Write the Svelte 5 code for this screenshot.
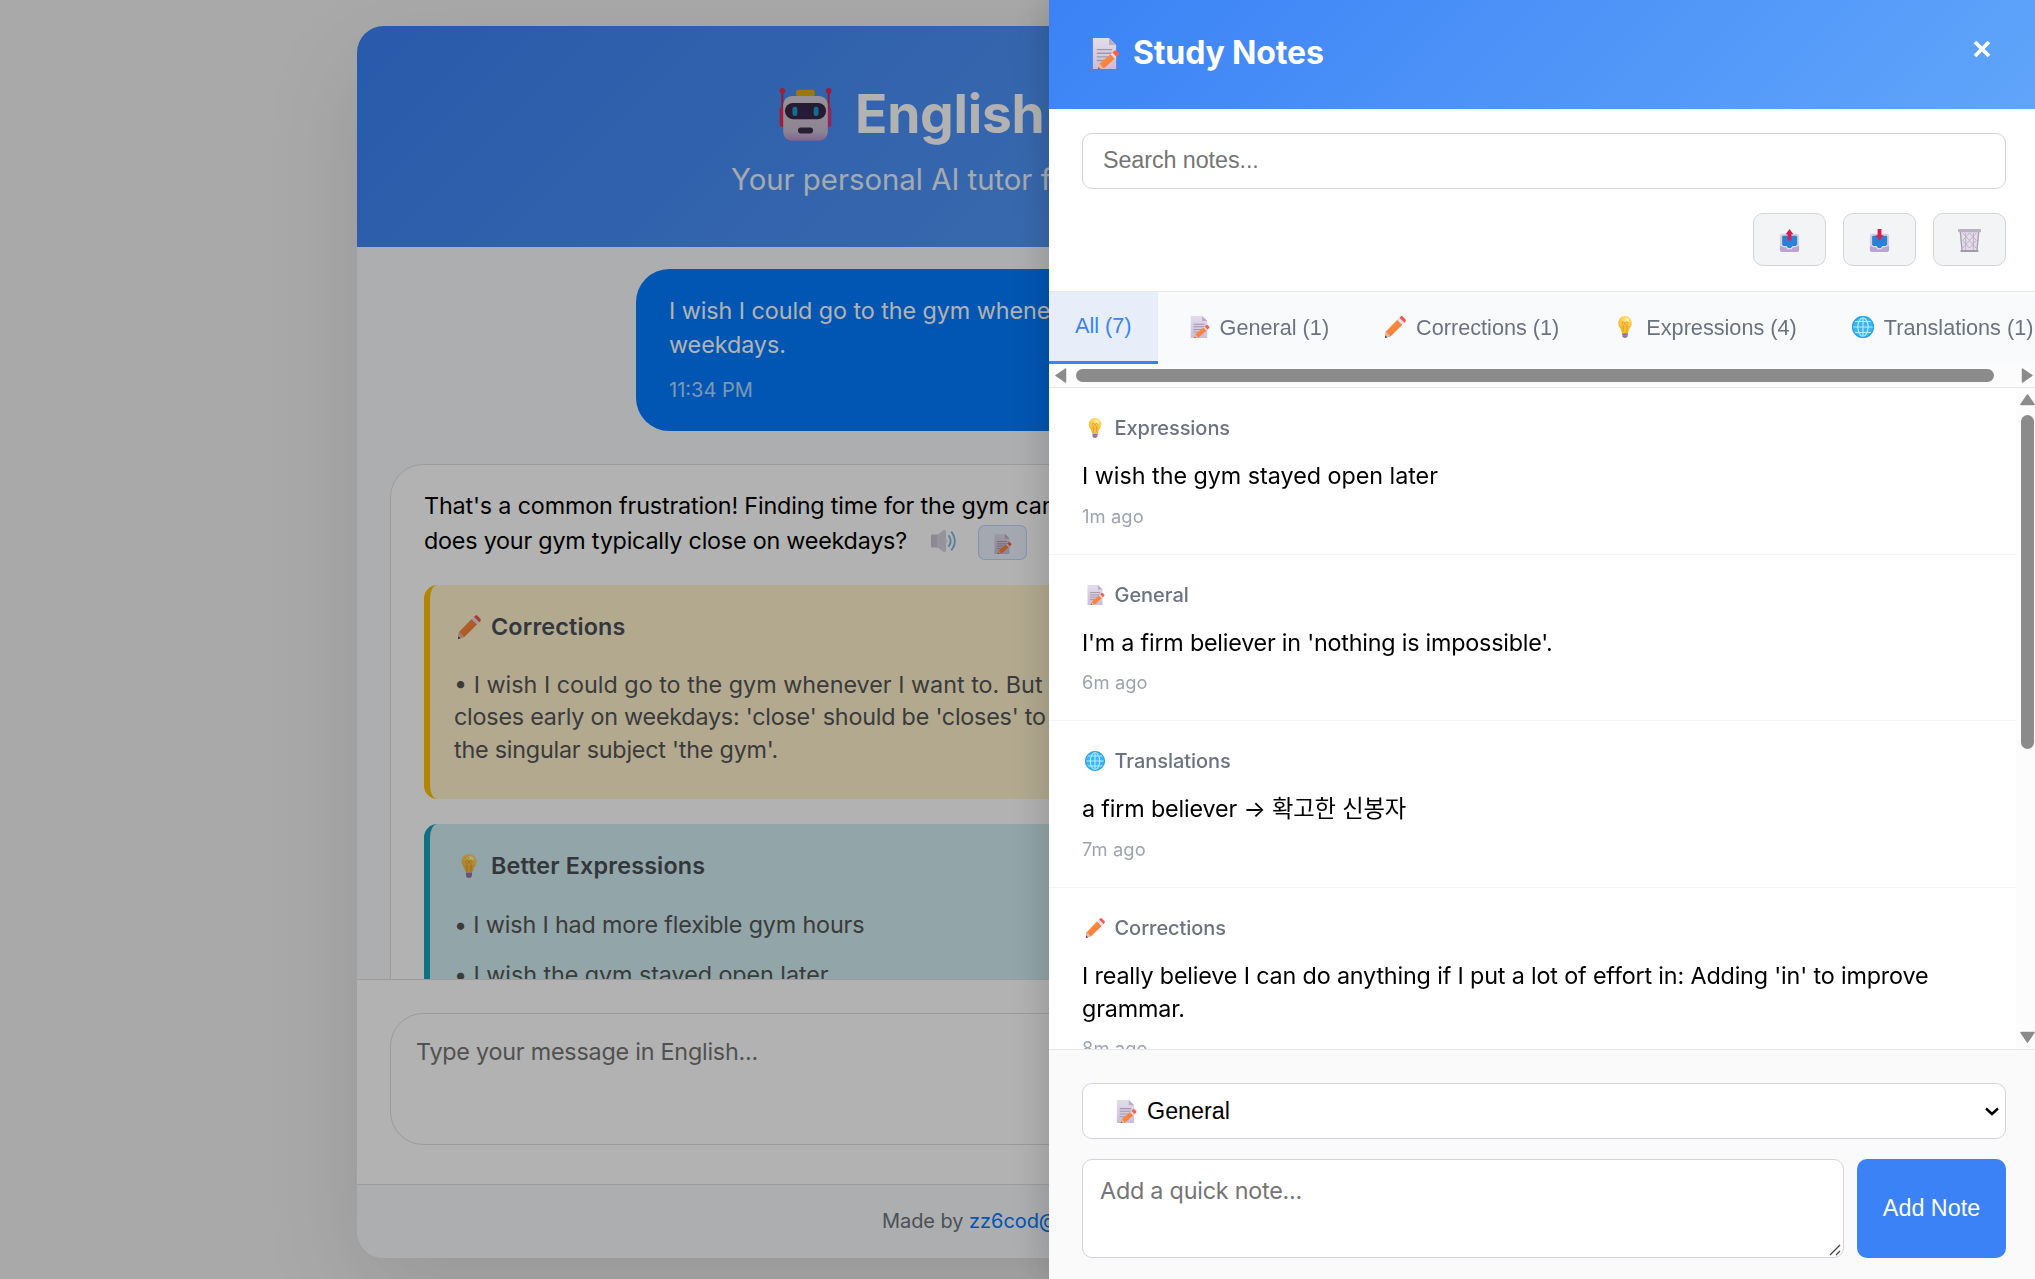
<script>
  const tabs = [
    { label: 'All (7)', icon: null, active: true },
    { label: 'General (1)', icon: 'memo' },
    { label: 'Corrections (1)', icon: 'pencil' },
    { label: 'Expressions (4)', icon: 'bulb' },
    { label: 'Translations (1)', icon: 'globe' }
  ];
  const notes = [
    { icon: 'bulb', category: 'Expressions', text: 'I wish the gym stayed open later', time: '1m ago' },
    { icon: 'memo', category: 'General', text: "I'm a firm believer in 'nothing is impossible'.", time: '6m ago', tight: true },
    { icon: 'globe', category: 'Translations', text: 'a firm believer → 확고한 신봉자', time: '7m ago', snug: true },
    {
      icon: 'pencil',
      category: 'Corrections',
      text: "I really believe I can do anything if I put a lot of effort in: Adding 'in' to improve grammar.",
      time: '8m ago',
      snug: true
    }
  ];
</script>

<!-- Every glyph fills a 24x24 box so that it scales with the size of its label. -->
{#snippet icon(name)}
  <svg class="icon" viewBox="0 0 24 24" aria-hidden="true">
    {#if name === 'memo'}
      <path d="M3 0H15.500L21 5.500V24H3Z" fill="url(#paper)" />
      <path d="M15.500 0V5.500H21Z" fill="#b9aec2" />
      <path d="M6 9H18M6 11.800H18M6 14.600H15M6 17.400H12" stroke="#a197ac" stroke-width="1.100" />
      <path d="M18.200 11.200L21.400 14.700L12 23.100L7 24L8.300 19.800Z" fill="url(#orange)" />
      <path d="M16.700 12.500L18.200 11.200L21.400 14.700L19.900 16.100Z" fill="#e9dcee" />
      <path d="M18.200 11.200L20.200 9.700Q21 9.200 21.700 10L23.200 11.800Q23.700 12.500 23 13.200L21.400 14.700Z" fill="#fb5f4d" />
      <path d="M8.300 19.800L7 24L10.800 23.300Z" fill="#e8b9a8" />
      <path d="M7.400 22.600L7 24L8.500 23.700Z" fill="#40334a" />
    {:else if name === 'pencil'}
      <path d="M2 17L14.500 4L20 9.600L7.300 22L1 24Z" fill="url(#orange)" />
      <path d="M14.500 4L16.900 1.800L22.400 7.300L20 9.600Z" fill="#e6dceb" />
      <path d="M16.900 1.800L18.500.4Q19.400-.3 20.300.6L23.500 3.800Q24.200 4.700 23.500 5.900L22.400 7.300Z" fill="#fa5549" />
      <path d="M2 17L1 24L7.300 22Z" fill="#e0b7a4" />
      <path d="M1.400 21.400L1 24L3.500 23.200Z" fill="#45304b" />
    {:else if name === 'bulb'}
      <circle cx="12" cy="7.500" r="7.500" fill="url(#bulbFill)" />
      <path d="M5.500 11C8 14.500 8 17.800 9 18.500H15C16 17.800 16 14.500 18.500 11Z" fill="#f9b93d" />
      <path d="M10 17.500V9.500Q7.500 8 9.500 6.500Q12 6 12 9.500Q12 6 14.500 6.500Q16.500 8 14 9.500V17.500" fill="none" stroke="#e59524" stroke-width=".9" />
      <path d="M8.800 18.500H15.200L14.700 22.700L13 24H11L9.300 22.700Z" fill="#a686b5" />
      <path d="M9 20.400L15 19.700M9.500 22.400L14.700 21.700" stroke="#79618c" stroke-width=".8" />
      <ellipse cx="14.500" cy="4" rx="2.500" ry="1.500" fill="#fff3b4" transform="rotate(35 14.500 4)" />
    {:else if name === 'globe'}
      <circle cx="12" cy="12" r="12" fill="#38b6f5" />
      <path d="M12 .7V23.300M.7 12H23.300M2.500 6H21.500M2.500 18H21.500M12 .7C4.500 6 4.500 18 12 23.300C19.500 18 19.500 6 12 .7" fill="none" stroke="#b4ecff" stroke-width="1.300" />
      <circle cx="12" cy="12" r="11.300" fill="none" stroke="#2d9fe5" stroke-width="1.200" />
    {:else if name === 'speaker'}
      <path d="M0 6.500Q0 5.500 1 5.500H7V18.500H1Q0 18.500 0 17.500Z" fill="#b5abbd" />
      <path d="M6 6L12.500 1.300Q15 .3 15 2.500V21.500Q15 23.700 12.500 22.700L6 18Z" fill="#c9c1cf" />
      <path d="M15 9.500Q18 12 15 14.500Z" fill="#dcd6e0" />
      <path d="M18 7Q21.300 12 18 17M20.800 3.300Q27 12 20.800 20.700" fill="none" stroke="#3f93dd" stroke-width="1.800" stroke-linecap="round" />
    {:else if name === 'outbox' || name === 'inbox'}
      <rect x="2" y="5" width="20" height="19" rx="3" fill="#d6cede" />
      <path d="M2 18H22V21Q22 24 19 24H5Q2 24 2 21Z" fill="#bba3d3" />
      <path d="M5.500 7H18.500Q20 7 20 8.500V16.500L18.500 18H15L13.500 20H10.500L9 18H5.500L4.300 16.500V8.500Q4.300 7 5.500 7Z" fill="#2a82d6" />
      <path d="M4.500 16.500V17.600Q4.500 19 6 19H8.500L10 21H14L15.500 19H18Q19.700 19 19.700 17.600V16.500L18.500 18H15L13.500 20H10.500L9 18H5.500Z" fill="#ece7f0" />
      {#if name === 'outbox'}
        <path d="M12 0L16 5.500H14V12H10V5.500H8Z" fill="#d91f51" />
      {:else}
        <path d="M10 0H14V6.500H16L12 12L8 6.500H10Z" fill="#d91f51" />
      {/if}
    {:else if name === 'basket'}
      <path d="M1.500 3H22.500L20.500 23H3.500Z" fill="#e4deea" />
      <path d="M2.500 3L4.300 23M21.500 3L19.700 23" stroke="#a99fb2" stroke-width="1.400" />
      <path d="M5 4L12 12L19 20M5 12L12 20M12 4L19 12M19 4L12 12L5 20M12 4L5 12M19 12L12 20M8 4V22M16 4V22" fill="none" stroke="#bcb0c6" stroke-width="1" />
      <rect x="0" y="0" width="24" height="3.300" rx="1" fill="#b9b2bf" />
      <rect x="2.500" y="21.800" width="19" height="2.200" rx=".8" fill="#a299aa" />
    {:else if name === 'robot'}
      <path d="M1.500 1.500V12M22.500 1.500V12" stroke="#d8234a" stroke-width=".9" />
      <circle cx="1.500" cy="1.300" r="1.300" fill="#ef294e" />
      <circle cx="22.500" cy="1.300" r="1.300" fill="#e3255c" />
      <rect x=".3" y="8.700" width="3" height="9" rx="1.300" fill="#ea2752" />
      <rect x="20.700" y="8.700" width="3" height="9" rx="1.300" fill="#cf367b" />
      <rect x="7.700" y=".8" width="8.500" height="3" rx="1" fill="#e7a51d" />
      <rect x="1.900" y="3.600" width="20.200" height="20.300" rx="4" fill="url(#robotFace)" />
      <rect x="2.700" y="6.800" width="18.600" height="7.300" rx="3.600" fill="#352848" />
      <rect x="6.100" y="8.500" width="2.200" height="4.200" rx="1" fill="#209ad2" />
      <rect x="15.700" y="8.500" width="2.200" height="4.200" rx="1" fill="#209ad2" />
      <rect x="8.600" y="17.900" width="6.800" height="2.700" rx="1.300" fill="#3a2d4b" />
    {/if}
  </svg>
{/snippet}

<svg class="defs" width="0" height="0" aria-hidden="true">
  <defs>
    <linearGradient id="paper" x1="0" y1="0" x2="0" y2="1"><stop offset="0" stop-color="#e4dcea" /><stop offset="1" stop-color="#cbbdd8" /></linearGradient>
    <linearGradient id="orange" x1="0" y1="0" x2="1" y2="1"><stop offset="0" stop-color="#ff9a3d" /><stop offset="1" stop-color="#f36f3a" /></linearGradient>
    <radialGradient id="bulbFill" cx=".6" cy=".3" r=".7"><stop offset="0" stop-color="#ffe46c" /><stop offset="1" stop-color="#fbb83c" /></radialGradient>
    <linearGradient id="robotFace" x1="0" y1="0" x2="0" y2="1"><stop offset="0" stop-color="#d9d2dc" /><stop offset=".8" stop-color="#cbbdd3" /><stop offset="1" stop-color="#b68fc9" /></linearGradient>
  </defs>
</svg>

<main class="page">
  <section class="chat">
    <header class="hero">
      <h1>{@render icon('robot')}<span>English</span></h1>
      <p>Your personal AI tutor fo</p>
    </header>

    <div class="messages">
      <div class="bubble user">
        <p>I wish I could go to the gym whene<br />weekdays.</p>
        <time>11:34 PM</time>
      </div>
      <div class="bubble tutor">
        <p class="snug">That's a common frustration! Finding time for the gym can</p>
        <div class="reply-line">
          <span class="tight">does your gym typically close on weekdays?</span>
          <span class="speak">{@render icon('speaker')}</span>
          <span class="save">{@render icon('memo')}</span>
        </div>
        <div class="tip corrections">
          <h2>{@render icon('pencil')}Corrections</h2>
          <p>
            • I wish I could go to the gym whenever I want to. But t<br /><span class="tight">closes early on weekdays: 'close' should be 'closes' to</span><br /><span class="tight">the singular subject 'the gym'.</span>
          </p>
        </div>
        <div class="tip expressions">
          <h2>{@render icon('bulb')}Better Expressions</h2>
          <p class="snug">• I wish I had more flexible gym hours</p>
          <p>• I wish the gym stayed open later</p>
        </div>
      </div>
    </div>

    <div class="composer"><div class="composer-field tight">Type your message in English...</div></div>
    <footer>Made by <span class="link">zz6cod@</span></footer>
  </section>
</main>

<div class="overlay"></div>

<aside class="drawer">
  <header class="drawer-head">
    <h2>{@render icon('memo')}Study Notes</h2>
    <svg class="close" viewBox="0 0 18 18" aria-label="Close"><path d="M2 2L16 16M16 2L2 16" stroke="#fff" stroke-width="3.800" /></svg>
  </header>

  <div class="tools">
    <div class="field search">Search notes...</div>
    <div class="actions">
      <span class="action">{@render icon('outbox')}</span>
      <span class="action">{@render icon('inbox')}</span>
      <span class="action">{@render icon('basket')}</span>
    </div>
  </div>

  <nav class="tabs">
    {#each tabs as tab}
      <span class="tab" class:active={tab.active}>
        {#if tab.icon}{@render icon(tab.icon)}{/if}{tab.label}
      </span>
    {/each}
  </nav>
  <div class="hbar">
    <svg viewBox="0 0 12 15"><path d="M10.500 1V14L1 7.500Z" /></svg>
    <span class="thumb"></span>
    <svg viewBox="0 0 12 15"><path d="M1.500 1V14L11 7.500Z" /></svg>
  </div>

  <div class="list">
    <div class="notes">
      {#each notes as note}
        <article>
          <h3>{@render icon(note.icon)}{note.category}</h3>
          <p class:tight={note.tight} class:snug={note.snug}>{note.text}</p>
          <time>{note.time}</time>
        </article>
      {/each}
    </div>
    <div class="vbar">
      <svg viewBox="0 0 15 12"><path d="M1 10.500H14L7.500 1Z" /></svg>
      <span class="thumb"></span>
      <svg viewBox="0 0 15 12"><path d="M1 1.500H14L7.500 11Z" /></svg>
    </div>
  </div>

  <div class="add">
    <div class="field select">
      {@render icon('memo')}<span>General</span>
      <svg class="chevron" viewBox="0 0 14 9"><path d="M1 1.500L7 7L13 1.500" fill="none" stroke="#000" stroke-width="2.400" /></svg>
    </div>
    <div class="add-row">
      <div class="field note tight">
        Add a quick note...
        <svg class="grip" viewBox="0 0 12 12"><path d="M1 11L11 1M7 11L11 7" stroke="#444" stroke-width="1.300" /></svg>
      </div>
      <div class="submit">Add Note</div>
    </div>
  </div>
</aside>

<style>
  :global(body) {
    overflow: hidden;
    font-family: Inter, 'Noto Sans CJK KR', sans-serif;
    font-size: 23.33px;
    color: #000;
  }
  h1, h2, h3, p { margin: 0; }
  .defs { position: absolute; }
  .icon { display: block; flex: none; width: 20px; height: 20px; overflow: visible; }
  .snug { letter-spacing: -0.16px; }
  .tight { letter-spacing: -0.22px; }

  .page {
    box-sizing: border-box;
    height: 1279px;
    padding: 26px 357px 21px;
    background: #f2f2f2;
  }
  .chat {
    display: flex;
    flex-direction: column;
    height: 1232px;
    border-radius: 26.67px;
    overflow: hidden;
    background: #fff;
    box-shadow: 0 33px 100px rgba(0, 0, 0, 0.1);
  }
  .hero {
    box-sizing: border-box;
    flex: none;
    height: 221px;
    padding: 56px 0 0 374px;
    background: linear-gradient(135deg, #3b82f6, #60a5fa);
    color: #fff;
    white-space: nowrap;
  }
  .hero h1 {
    display: flex;
    align-items: center;
    gap: 23px;
    padding-left: 48px;
    font-size: 53.33px;
    line-height: 64px;
    font-weight: 700;
    letter-spacing: -0.25px;
  }
  .hero h1 .icon { width: 53px; height: 53px; }
  .hero p { margin-top: 13px; font-size: 29.33px; line-height: 42px; opacity: 0.9; }

  .messages {
    flex: 1;
    min-height: 0;
    overflow: hidden;
    padding: 22px 33px 0;
    background: #f8f9fb;
    white-space: nowrap;
  }
  .bubble { box-sizing: border-box; border-radius: 33.33px; line-height: 34.67px; }
  .user {
    width: 925px;
    height: 162px;
    margin-left: 246px;
    padding: 25px 33px;
    background: #007bff;
    color: #fff;
    line-height: 34px;
    letter-spacing: -0.06px;
  }
  .user time { display: block; margin-top: 13px; font-size: 20px; line-height: 30px; letter-spacing: 0; opacity: 0.7; }
  .tutor {
    width: 925px;
    height: 900px;
    margin-top: 33px;
    padding: 24px 33px;
    border: 1px solid #e0e0e0;
    background: #fff;
  }
  .reply-line { display: flex; align-items: flex-start; }
  .speak { margin: 5px 0 0 24px; opacity: 0.7; }
  .speak .icon { width: 24px; height: 24px; }
  .save {
    box-sizing: border-box;
    display: flex;
    align-items: center;
    justify-content: center;
    width: 49px;
    height: 35px;
    margin: 1px 0 0 23px;
    padding-top: 3px;
    border: 1px solid rgba(59, 130, 246, 0.25);
    border-radius: 6.67px;
    background: rgba(59, 130, 246, 0.1);
  }
  .tip {
    box-sizing: border-box;
    padding: 26px 24px;
    border-left: 6px solid;
    border-radius: 13.33px;
    line-height: 32.67px;
    color: #555;
  }
  .tip h2 {
    display: flex;
    align-items: center;
    gap: 10px;
    padding-left: 3px;
    font-size: 23.33px;
    line-height: 32px;
    font-weight: 600;
    letter-spacing: 0.17px;
    color: #495057;
  }
  .tip h2 .icon { width: 24px; height: 24px; }
  .corrections { height: 214px; margin-top: 25px; border-color: #ffc107; background: #fff3cd; }
  .corrections p { margin-top: 26px; }
  .expressions { height: 400px; margin-top: 25px; border-color: #17a2b8; background: #d1ecf1; }
  .expressions p { margin-top: 27px; }
  .expressions p + p { margin-top: 18px; letter-spacing: -0.06px; }

  .composer { box-sizing: border-box; flex: none; height: 205px; padding: 33px; border-top: 1px solid #e0e0e0; }
  .composer-field {
    box-sizing: border-box;
    height: 132px;
    padding: 20px 25px;
    border: 1px solid #ddd;
    border-radius: 33.33px;
    line-height: 35px;
    color: #757575;
  }
  footer {
    box-sizing: border-box;
    flex: none;
    height: 74px;
    padding: 20px 0 0 525px;
    border-top: 1px solid #e0e0e0;
    background: #f8f9fb;
    font-size: 20px;
    line-height: 32px;
    letter-spacing: -0.06px;
    color: #6c757d;
    white-space: nowrap;
  }
  .link { color: #007bff; }

  .overlay { position: fixed; inset: 0; background: rgba(0, 0, 0, 0.3); }

  .drawer {
    position: fixed;
    top: 0;
    right: 0;
    display: flex;
    flex-direction: column;
    width: 986px;
    height: 1279px;
    background: #fff;
    box-shadow: -7px 0 33px rgba(0, 0, 0, 0.15);
  }
  .drawer-head {
    box-sizing: border-box;
    flex: none;
    display: flex;
    align-items: flex-start;
    justify-content: space-between;
    height: 109px;
    padding: 33px 44px 0 40px;
    background: linear-gradient(135deg, #3b82f6, #60a5fa);
    color: #fff;
  }
  .drawer-head h2 { display: flex; align-items: center; gap: 13px; font-size: 32px; line-height: 40px; font-weight: 700; letter-spacing: -0.15px; }
  .drawer-head .icon { width: 31px; height: 31px; }
  .close { width: 18px; height: 18px; margin-top: 7px; }

  .tools { box-sizing: border-box; flex: none; height: 182px; padding: 24px 29px 0 33px; }
  .field {
    box-sizing: border-box;
    border: 1px solid #d1d5db;
    border-radius: 10px;
    background: #fff;
  }
  .search {
    height: 56px;
    padding: 0 20px;
    font-family: 'Liberation Sans', sans-serif;
    line-height: 53px;
    letter-spacing: -0.08px;
    color: #757575;
  }
  .actions { display: flex; justify-content: flex-end; gap: 17px; margin-top: 24px; }
  .action {
    box-sizing: border-box;
    display: flex;
    align-items: center;
    justify-content: center;
    width: 73px;
    height: 53px;
    border: 1px solid #d1d5db;
    border-radius: 10px;
    background: #f3f4f6;
  }
  .action .icon { width: 23px; height: 23px; margin-top: 2px; }

  .tabs {
    box-sizing: border-box;
    flex: none;
    display: flex;
    height: 73px;
    overflow: hidden;
    border-top: 1px solid #e5e7eb;
    background: #f9fafc;
    font-family: 'Liberation Sans', sans-serif;
    font-size: 21.67px;
    color: #6b7280;
    white-space: nowrap;
  }
  .tab {
    display: flex;
    flex: none;
    align-items: center;
    gap: 10px;
    padding: 2px 25px 0 30px;
    border-bottom: 3px solid transparent;
  }
  .tab .icon { width: 22px; height: 22px; margin-top: -1px; }
  .tab.active { padding: 0 26px 2px; border-color: #3b82f6; background: #e7eefa; color: #3b82f6; }

  .hbar {
    box-sizing: border-box;
    flex: none;
    display: flex;
    align-items: center;
    height: 24px;
    padding: 0 1px 0 6px;
    border-bottom: 1px solid #e5e7eb;
    background: #fcfcfc;
  }
  .hbar svg { width: 12px; height: 15px; }
  .hbar .thumb { width: 918px; height: 13px; margin: 0 27px 0 9px; border-radius: 7px; background: #8b8b8b; }
  .hbar path, .vbar path { fill: #8b8b8b; stroke: #8b8b8b; stroke-width: 1.5; stroke-linejoin: round; }

  .list { display: flex; flex: 1; min-height: 0; }
  .notes { flex: 1; overflow: hidden; }
  article { padding: 26px 33px 25px; border-bottom: 1px solid #f3f4f6; }
  article h3 {
    display: flex;
    align-items: center;
    gap: 9.5px;
    padding-left: 3px;
    font-size: 20px;
    line-height: 28px;
    font-weight: 500;
    letter-spacing: -0.05px;
    color: #6b7280;
  }
  article p { margin-top: 18px; line-height: 32.67px; }
  article p:not(.snug, .tight) { letter-spacing: -0.03px; }
  article time { display: block; margin-top: 10px; font-size: 18.33px; line-height: 26px; letter-spacing: 0.1px; color: #9ca3af; }
  .vbar {
    flex: none;
    display: flex;
    flex-direction: column;
    align-items: flex-end;
    box-sizing: border-box;
    width: 19px;
    padding-top: 6px;
    background: #fcfcfc;
  }
  .vbar svg { width: 15px; height: 12px; }
  .vbar .thumb { width: 13px; height: 334px; margin: 9px 1px 282px 0; border-radius: 7px; background: #8b8b8b; }

  .add {
    box-sizing: border-box;
    flex: none;
    height: 230px;
    padding: 33px 29px 21px 33px;
    border-top: 1px solid #e5e7eb;
    background: #fafafa;
  }
  .select {
    display: flex;
    align-items: center;
    gap: 10px;
    height: 56px;
    padding: 0 6px 0 31px;
    font-family: 'Liberation Sans', sans-serif;
  }
  .select .icon { width: 23px; height: 23px; }
  .chevron { width: 14px; height: 9px; margin-left: auto; }
  .add-row { display: flex; gap: 13px; margin-top: 20px; }
  .note { position: relative; flex: 1; height: 99px; padding: 14px 17px; line-height: 33px; color: #757575; }
  .grip { position: absolute; right: 2px; bottom: 1px; width: 12px; height: 12px; }
  .submit {
    width: 149px;
    height: 99px;
    border-radius: 10px;
    background: #3b82f6;
    color: #fff;
    font-family: 'Liberation Sans', sans-serif;
    line-height: 98px;
    text-align: center;
  }
</style>
